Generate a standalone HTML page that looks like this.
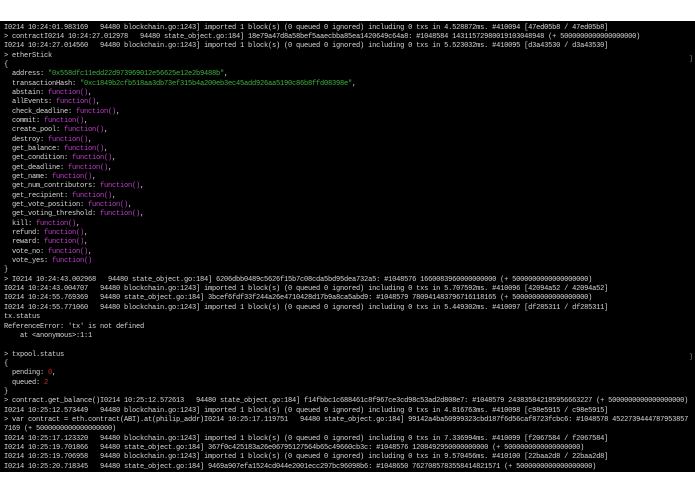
<!DOCTYPE html>
<html><head><meta charset="utf-8"><style>
html,body{margin:0;padding:0;background:#fff;width:695px;height:494px;overflow:hidden}
#t{position:absolute;left:0;top:21px;width:695px;height:451px;background:#000}
pre{position:absolute;left:4px;top:2.5px;margin:0;font-family:"Liberation Mono",monospace;font-size:7px;letter-spacing:-0.2px;line-height:9.35px;color:#d8d8d8;white-space:pre}
.g{color:#3fb43f}.m{color:#c040c8}.r{color:#d03030}
.b{position:absolute;right:2px;color:#888;font:6.7px "Liberation Mono",monospace}
</style></head><body><div id="t"><pre>I0214 10:24:01.983169   94480 blockchain.go:1243] imported 1 block(s) (0 queued 0 ignored) including 0 txs in 4.528872ms. #410094 [47ed05b8 / 47ed05b8]
> contractI0214 10:24:27.012978   94480 state_object.go:184] 18e79a47d8a58bef5aaecbba85ea1420649c64a8: #1048584 14311572980019103048948 (+ 5000000000000000000)
I0214 10:24:27.014560   94480 blockchain.go:1243] imported 1 block(s) (0 queued 0 ignored) including 0 txs in 5.523032ms. #410095 [d3a43530 / d3a43530]
> etherStick
{
  address: <span class="g">"0x558dfc11edd22d973969012e56625e12e2b9488b"</span>,
  transactionHash: <span class="g">"0xc1849b2cfb518aa3db73ef315b4a200eb3ec45add926aa5190c86b8ffd08398e"</span>,
  abstain: <span class="m">function()</span>,
  allEvents: <span class="m">function()</span>,
  check_deadline: <span class="m">function()</span>,
  commit: <span class="m">function()</span>,
  create_pool: <span class="m">function()</span>,
  destroy: <span class="m">function()</span>,
  get_balance: <span class="m">function()</span>,
  get_condition: <span class="m">function()</span>,
  get_deadline: <span class="m">function()</span>,
  get_name: <span class="m">function()</span>,
  get_num_contributors: <span class="m">function()</span>,
  get_recipient: <span class="m">function()</span>,
  get_vote_position: <span class="m">function()</span>,
  get_voting_threshold: <span class="m">function()</span>,
  kill: <span class="m">function()</span>,
  refund: <span class="m">function()</span>,
  reward: <span class="m">function()</span>,
  vote_no: <span class="m">function()</span>,
  vote_yes: <span class="m">function()</span>
}
> I0214 10:24:43.002968   94480 state_object.go:184] 6206dbb0489c5626f15b7c08cda5bd95dea732a5: #1048576 1660083960000000000 (+ 5000000000000000000)
I0214 10:24:43.004707   94480 blockchain.go:1243] imported 1 block(s) (0 queued 0 ignored) including 0 txs in 5.707592ms. #410096 [42094a52 / 42094a52]
I0214 10:24:55.769369   94480 state_object.go:184] 3bcef6fdf33f244a26e4710428d17b9a8ca5abd9: #1048579 780941483796716118165 (+ 5000000000000000000)
I0214 10:24:55.771060   94480 blockchain.go:1243] imported 1 block(s) (0 queued 0 ignored) including 0 txs in 5.449302ms. #410097 [df285311 / df285311]
tx.status
ReferenceError: 'tx' is not defined
    at &lt;anonymous&gt;:1:1

> txpool.status
{
  pending: <span class="r">0</span>,
  queued: <span class="r">2</span>
}
> contract.get_balance()I0214 10:25:12.572613   94480 state_object.go:184] f14fbbc1c688461c8f967ce3cd98c53ad2d808e7: #1048579 243835842185956663227 (+ 5000000000000000000)
I0214 10:25:12.573449   94480 blockchain.go:1243] imported 1 block(s) (0 queued 0 ignored) including 0 txs in 4.816763ms. #410098 [c98e5915 / c98e5915]
> var contract = eth.contract(ABI).at(philip_addr)I0214 10:25:17.119751   94480 state_object.go:184] 99142a4ba50999323cbd187f6d56caf8723fcbc6: #1048578 4522739444787953857
7169 (+ 5000000000000000000)
I0214 10:25:17.123320   94480 blockchain.go:1243] imported 1 block(s) (0 queued 0 ignored) including 0 txs in 7.336994ms. #410099 [f2067584 / f2067584]
I0214 10:25:19.701866   94480 state_object.go:184] 367f0c425183a26e06795127564b65c49660cb3c: #1048576 1208492950000000000 (+ 5000000000000000000)
I0214 10:25:19.706958   94480 blockchain.go:1243] imported 1 block(s) (0 queued 0 ignored) including 0 txs in 9.570456ms. #410100 [22baa2d8 / 22baa2d8]
I0214 10:25:20.718345   94480 state_object.go:184] 9469a907efa1524cd044e2001ecc297bc96098b6: #1048650 7627085783558414821571 (+ 5000000000000000000)</pre>
<span class="b" style="top:34px">]</span><span class="b" style="top:332px">]</span></div></body></html>
